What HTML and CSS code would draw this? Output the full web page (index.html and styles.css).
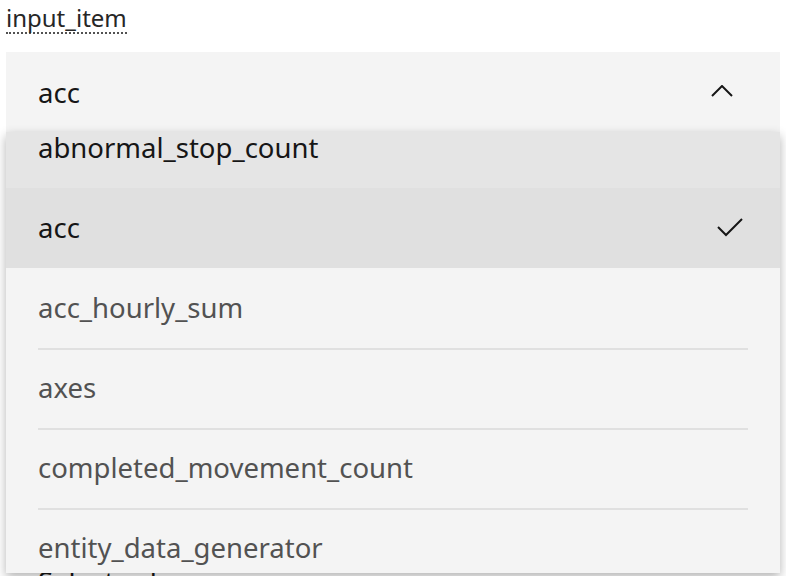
FILE: index.html
```html
<!DOCTYPE html>
<html>
<head>
<meta charset="utf-8">
<link rel="stylesheet" href="styles.css">
</head>
<body>
<div class="form">
  <div class="item">
    <label class="label">input_item</label>
    <div class="dropdown">
      <div class="field">
        <span class="value">acc</span>
        <svg class="chev" width="22" height="12" viewBox="0 0 22 12"><path d="M1 11 L11 1 L21 11" fill="none" stroke="#161616" stroke-width="2"/></svg>
      </div>
      <div class="menu">
        <div class="list">
          <div class="opt hover"><span class="txt">abnormal_stop_count</span></div>
          <div class="opt selected"><span class="txt">acc</span>
            <svg class="check" width="28" height="20" viewBox="0 0 28 20"><path d="M2 10 L10 18 L26 2" fill="none" stroke="#161616" stroke-width="2"/></svg>
          </div>
          <div class="opt"><span class="txt">acc_hourly_sum</span></div>
          <div class="opt"><span class="txt">axes</span></div>
          <div class="opt"><span class="txt">completed_movement_count</span></div>
          <div class="opt"><span class="txt">entity_data_generator</span></div>
        </div>
      </div>
    </div>
  </div>
  <div class="next">Select rule</div>
</div>
</body>
</html>
```

FILE: styles.css
```css
* { box-sizing: border-box; }
html, body { margin: 0; padding: 0; background: #ffffff; }
html { height: 576px; }
body { min-height: 576px; font-family: "Noto Sans", "Open Sans", sans-serif; color: #161616; overflow: hidden; }
.form { padding: 4px 6px 0 6px; height: 576px; }
.label {
  display: inline-block;
  font-size: 24px;
  line-height: 28px;
  color: #262626;
  border-bottom: 2px dotted #525252;
}
.item { display: flex; flex-direction: column; align-items: flex-start; gap: 18px; }
.dropdown { position: relative; width: 100%; }
.field {
  height: 80px;
  background: #f4f4f4;
  display: flex;
  align-items: center;
  justify-content: space-between;
  padding: 0 47px 0 32px;
}
.value { font-size: 27.5px; color: #161616; }
.chev { display: block; margin-top: -2px; }
.menu {
  position: absolute;
  top: 80px;
  left: 0;
  right: 0;
  height: 441px;
  overflow: hidden;
  background: #f4f4f4;
  box-shadow: 0 4px 10px rgba(0,0,0,0.3);
  z-index: 2;
}
.list { margin-top: -24px; }
.opt {
  height: 80px;
  padding: 0 32px;
  display: flex;
  align-items: center;
  justify-content: space-between;
  position: relative;
}
.opt .txt {
  display: flex;
  align-items: center;
  height: 80px;
  flex: 1;
  font-size: 27.5px;
  color: #525252;
  border-top: 2px solid #e0e0e0;
  padding-bottom: 4px;
}
.opt.selected { background: #e0e0e0; }
.opt.hover { background: #e5e5e5; }
.opt.hover .txt, .opt.selected .txt { color: #161616; border-top-color: transparent; }
.opt.selected + .opt .txt { border-top-color: transparent; }
.check { position: absolute; right: 36px; top: 29px; }
.next { padding-left: 32px; font-size: 27.5px; line-height: 36px; color: #161616; height: 40px; margin-top: 432px; }
```
